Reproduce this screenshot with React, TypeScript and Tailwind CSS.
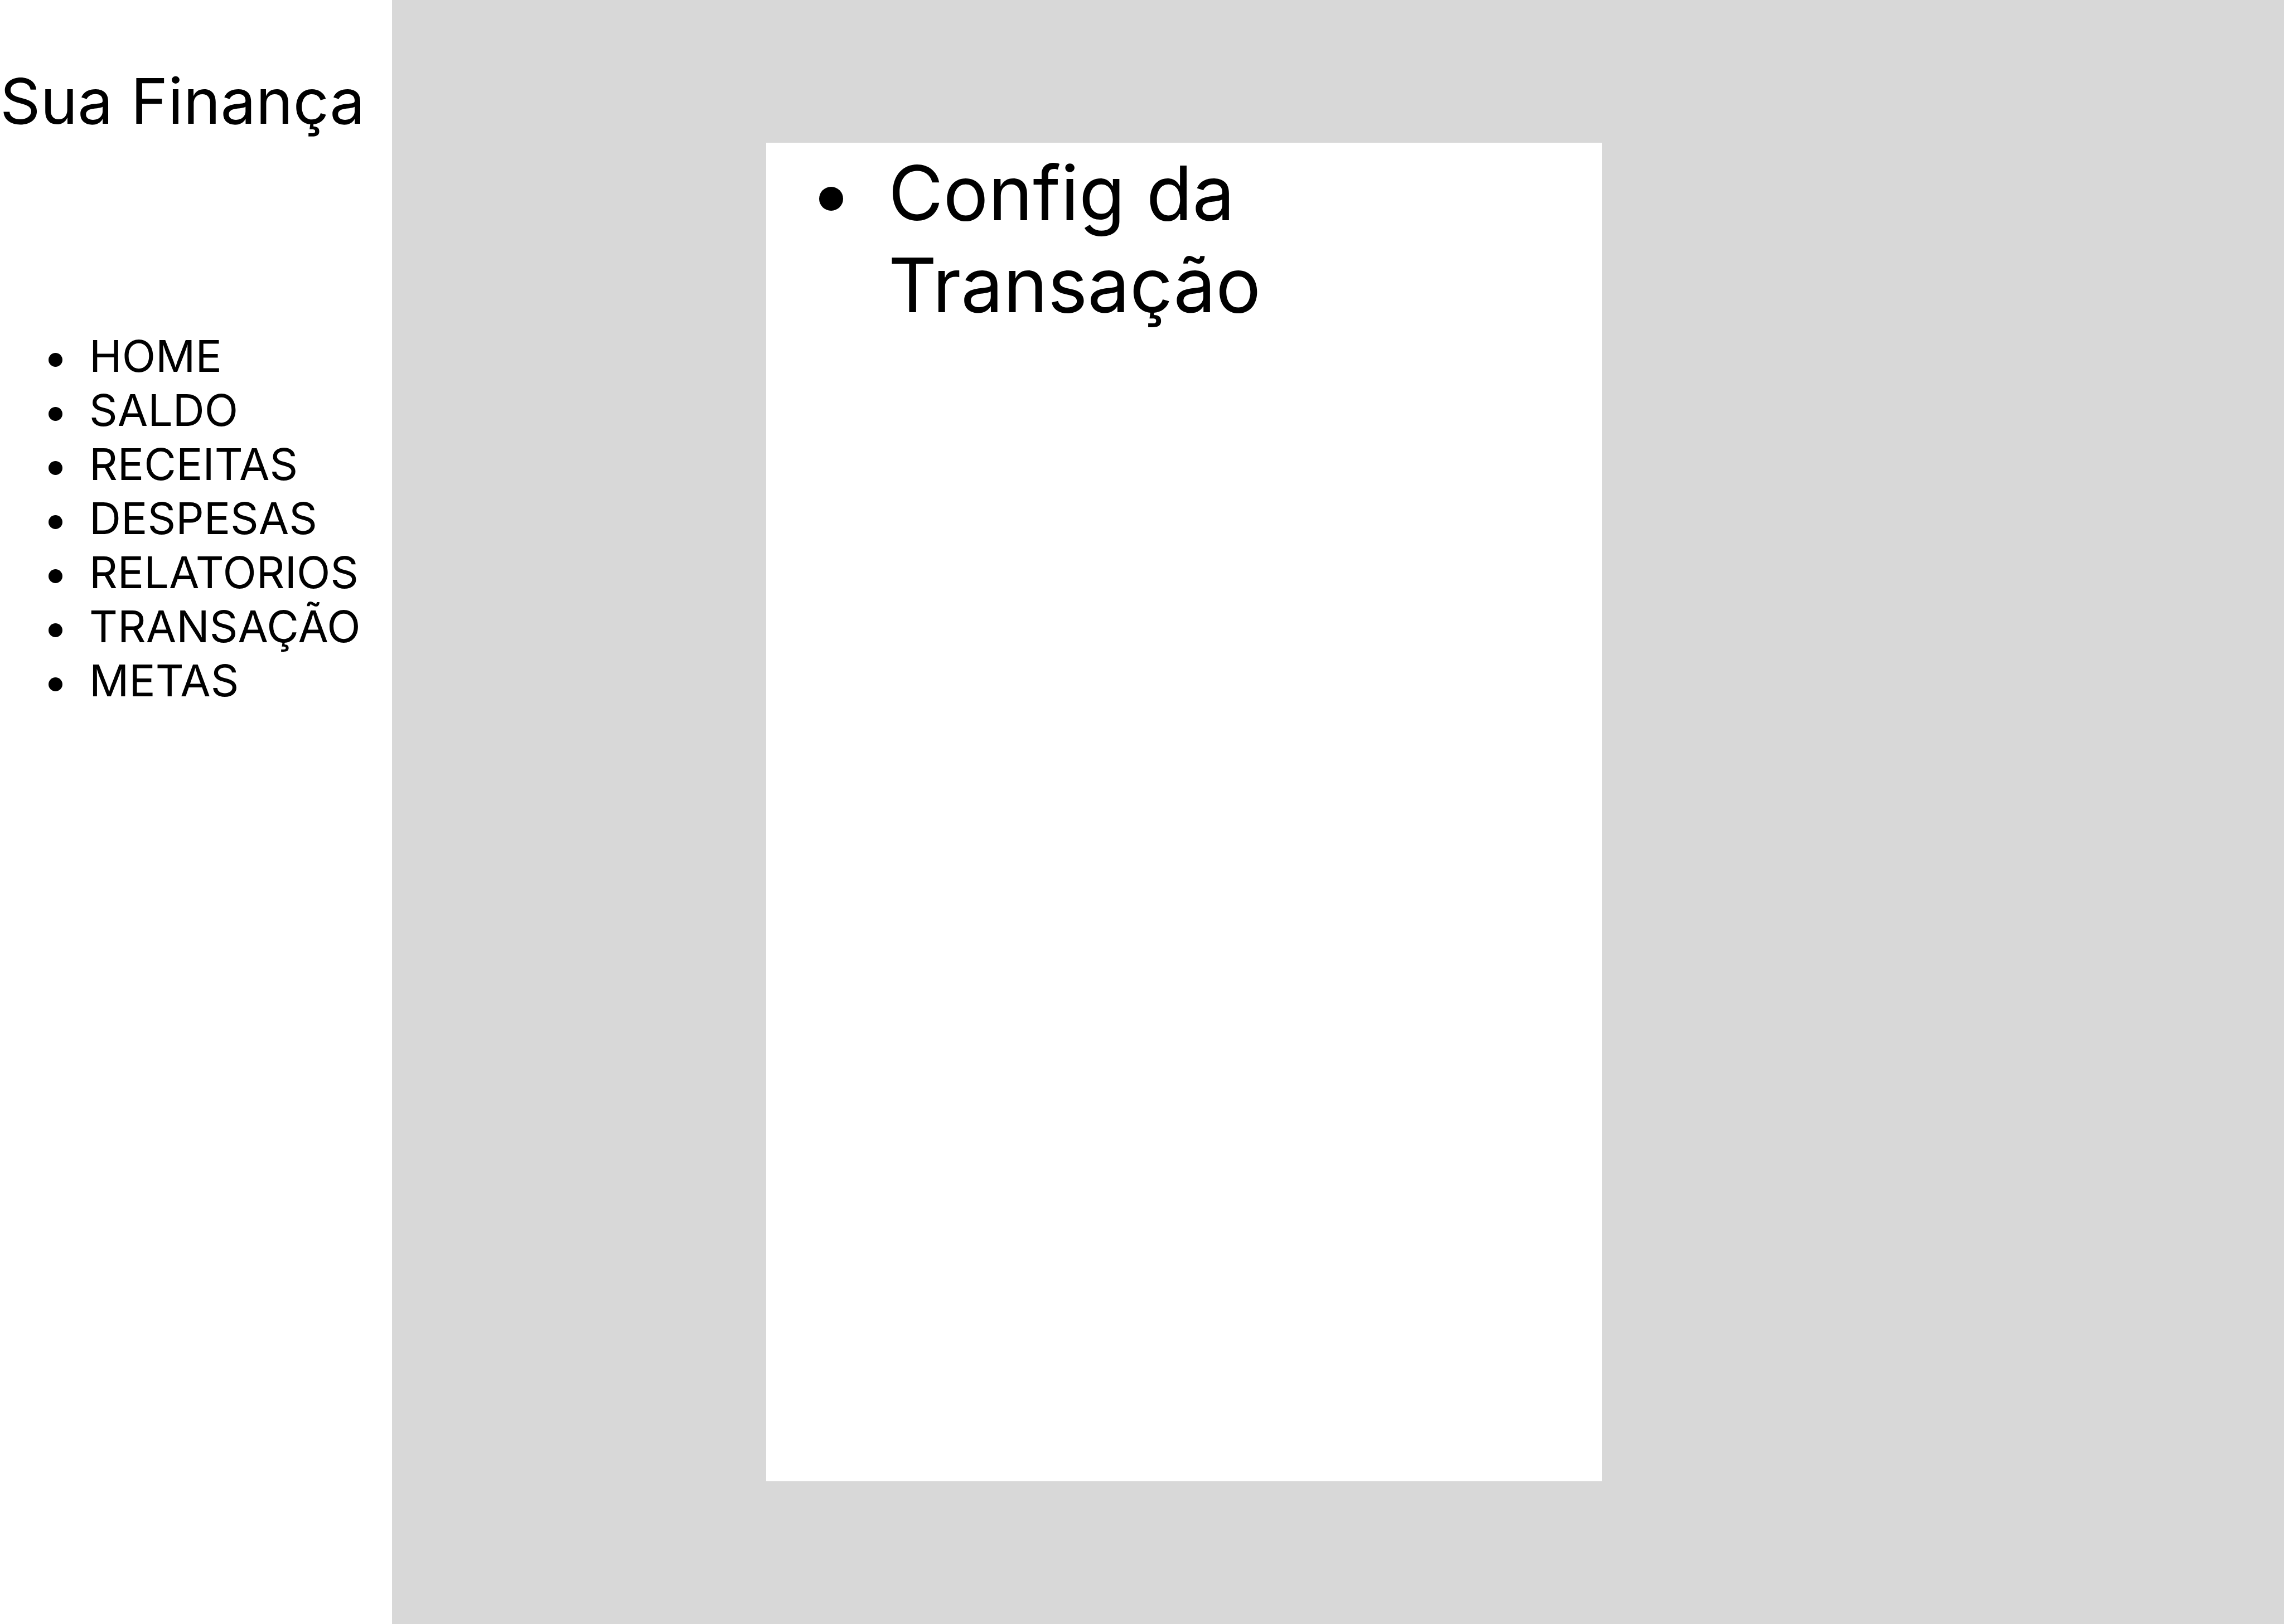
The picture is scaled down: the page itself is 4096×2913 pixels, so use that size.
const items = ["HOME", "SALDO", "RECEITAS", "DESPESAS", "RELATORIOS", "TRANSAÇÃO", "METAS"];

function Bullet({ className }: { className: string }) {
  return <span aria-hidden="true" className={`shrink-0 rounded-full bg-black ${className}`} />;
}

export default function App() {
  return (
    <div className="flex min-h-screen bg-[#d8d8d8] font-['Inter',sans-serif] text-black">
      <aside className="w-[703px] shrink-0 bg-white pt-[110px]">
        <h1 className="whitespace-nowrap text-[113px] leading-[142px]">Sua Finança</h1>
        <nav className="mt-[338px] pl-[87px]">
          <ul className="text-[79px] leading-[97px]">
            {items.map((item) => (
              <li key={item} className="flex items-center">
                <Bullet className="mt-[14px] mr-[48px] size-[25px]" />
                <a href="#" className="whitespace-nowrap">{item}</a>
              </li>
            ))}
          </ul>
        </nav>
      </aside>
      <main className="grid flex-1 grid-cols-[671fr_1499fr_1223fr] py-[256px]">
        <section className="col-start-2 bg-white pt-2 pl-[95px]">
          <div className="flex text-[135px] leading-[165px]">
            <Bullet className="mt-[71px] mr-[81px] size-[43px]" />
            <h2 className="max-w-[900px]">Config da Transação</h2>
          </div>
        </section>
      </main>
    </div>
  );
}
